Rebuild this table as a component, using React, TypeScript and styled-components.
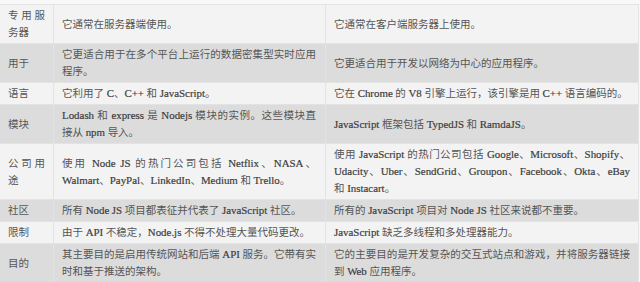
import React from "react";
import styled, { createGlobalStyle } from "styled-components";

const Global = createGlobalStyle`
  html, body { margin: 0; padding: 0; background: #f8f8f8; }
  body { width: 640px; height: 282px; overflow: hidden; }
`;

const Grid = styled.div`
  display: grid;
  grid-template-columns: 53px 271px 312px;
  gap: 1px;
  width: 638px;
  margin-top: 4px;
  border-top: 1px solid #e3e3e3;
  border-bottom: 1px solid #e3e3e3;
  border-right: 1px solid #e3e3e3;
  background: #e3e3e3;
  font-family: "Liberation Serif", "Noto Sans CJK SC", serif;
  font-size: 10.5px;
  line-height: 17px;
  color: #555555;
`;

const Row = styled.div`
  display: contents;
`;

const Cell = styled.div<{ $dark: boolean; $pr: number }>`
  display: grid;
  align-items: center;
  padding: 2px ${(p) => p.$pr}px 2px 8px;
  background: ${(p) => (p.$dark ? "#dcdcdc" : "#f3f3f3")};
`;

const Text = styled.div`
  text-align: justify;
`;

const Latin = styled.span`
  font-size: 10.9px;
  color: #3d3d3d;
  -webkit-text-stroke: 0.2px #3d3d3d;
`;

const rows: [string, string, string][] = [
  ["专用服务器", "它通常在服务器端使用。", "它通常在客户端服务器上使用。"],
  ["用于", "它更适合用于在多个平台上运行的数据密集型实时应用程序。", "它更适合用于开发以网络为中心的应用程序。"],
  ["语言", "它利用了 C、C++ 和 JavaScript。", "它在 Chrome 的 V8 引擎上运行，该引擎是用 C++ 语言编码的。"],
  ["模块", "Lodash 和 express 是 Nodejs 模块的实例。这些模块直接从 npm 导入。", "JavaScript 框架包括 TypedJS 和 RamdaJS。"],
  [
    "公司用途",
    "使用 Node JS 的热门公司包括 Netflix、NASA、Walmart、PayPal、LinkedIn、Medium 和 Trello。",
    "使用 JavaScript 的热门公司包括 Google、Microsoft、Shopify、Udacity、Uber、SendGrid、Groupon、Facebook、Okta、eBay 和 Instacart。",
  ],
  ["社区", "所有 Node JS 项目都表征并代表了 JavaScript 社区。", "所有的 JavaScript 项目对 Node JS 社区来说都不重要。"],
  ["限制", "由于 API 不稳定，Node.js 不得不处理大量代码更改。", "JavaScript 缺乏多线程和多处理器能力。"],
  ["目的", "其主要目的是启用传统网站和后端 API 服务。它带有实时和基于推送的架构。", "它的主要目的是开发复杂的交互式站点和游戏，并将服务器链接到 Web 应用程序。"],
];

const rightPad = [8, 9, 8];

function renderText(text: string) {
  const parts = text.split(/([A-Za-z0-9][A-Za-z0-9.+]*)/);
  return parts.map((p, i) => (i % 2 === 1 ? <Latin key={i}>{p}</Latin> : p));
}

export default function App() {
  return (
    <>
      <Global />
      <Grid>
        {rows.map((r, i) => (
          <Row key={i}>
            {r.map((c, j) => (
              <Cell key={j} $dark={i % 2 === 1} $pr={rightPad[j]}>
                <Text>{j === 0 ? c : renderText(c)}</Text>
              </Cell>
            ))}
          </Row>
        ))}
      </Grid>
    </>
  );
}
